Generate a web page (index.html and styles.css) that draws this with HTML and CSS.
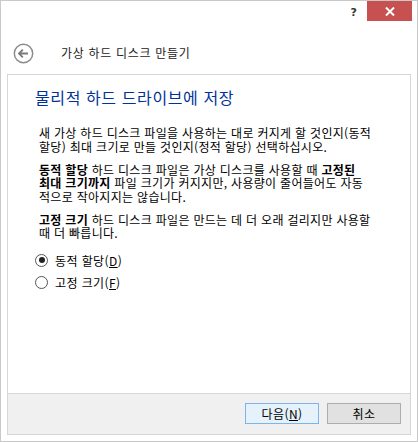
FILE: index.html
```html
<!DOCTYPE html>
<html lang="ko">
<head>
    <meta charset="UTF-8">
    <meta name="viewport" content="width=device-width, initial-scale=1.0">
    <title>가상 하드 디스크 만들기</title>
    <link rel="stylesheet" href="styles.css">
</head>
<body>
    <div class="window">
        <div class="titlebar">
            <span class="help">?</span>
            <div class="close">
                <svg width="10" height="9" viewBox="0 0 10 9">
                    <path d="M1 0.5 L9 8.5 M9 0.5 L1 8.5" stroke="#fff" stroke-width="2" fill="none"/>
                </svg>
            </div>
        </div>

        <div class="header">
            <svg class="back" width="21" height="21" viewBox="0 0 21 21">
                <circle cx="10.5" cy="10.5" r="9.2" stroke="#8c8c8c" stroke-width="1.5" fill="none"/>
                <path d="M6 10.5 H15 M9.8 6.6 L6 10.5 L9.8 14.4" stroke="#7a7a7a" stroke-width="1.8" fill="none"/>
            </svg>
            <span class="title">가상 하드 디스크 만들기</span>
        </div>

        <div class="panel">
            <div class="content">
                <h1>물리적 하드 드라이브에 저장</h1>
                <p>새 가상 하드 디스크 파일을 사용하는 대로 커지게 할 것인지(동적<br>할당) 최대 크기로 만들 것인지(정적 할당) 선택하십시오.</p>
                <p><b>동적 할당</b> 하드 디스크 파일은 가상 디스크를 사용할 때 <b>고정된</b><br><b>최대 크기까지</b> 파일 크기가 커지지만, 사용량이 줄어들어도 자동<br>적으로 작아지지는 않습니다.</p>
                <p><b>고정 크기</b> 하드 디스크 파일은 만드는 데 더 오래 걸리지만 사용할<br>때 더 빠릅니다.</p>

                <div class="radio first">
                    <span class="dot checked"></span>
                    <span>동적 할당(<u>D</u>)</span>
                </div>
                <div class="radio">
                    <span class="dot"></span>
                    <span>고정 크기(<u>F</u>)</span>
                </div>
            </div>

            <div class="footer">
                <button type="button" class="btn primary">다음(<u>N</u>)</button>
                <button type="button" class="btn">취소</button>
            </div>
        </div>
    </div>
</body>
</html>
```

FILE: styles.css
```css
body {
    margin: 0;
    padding: 0;
    font-family: "Noto Sans CJK KR", "Noto Sans", sans-serif;
    font-size: 12px;
    color: #000;
    background-color: #fff;
}
.window {
    width: 418px;
    height: 442px;
    box-sizing: border-box;
    border: 1px solid #c9c9c9;
    background-color: #fff;
}
.titlebar {
    height: 20px;
    display: flex;
    justify-content: flex-end;
    align-items: center;
    padding-right: 5px;
}
.help {
    font-family: "DejaVu Sans", sans-serif;
    font-weight: bold;
    font-size: 11px;
    color: #333;
    margin-right: 10px;
    margin-top: 2px;
}
.close {
    width: 45px;
    height: 20px;
    background-color: #c75050;
    display: flex;
    justify-content: center;
    align-items: center;
}
.header {
    height: 53px;
    box-sizing: border-box;
    display: flex;
    align-items: center;
    padding: 11px 0 0 12px;
}
.title {
    margin-left: 27px;
    color: #222;
    line-height: 14px;
    letter-spacing: 0.7px;
}
.panel {
    margin: 0 6px;
    height: 361px;
    box-sizing: border-box;
    border: 1px solid #d6d6d6;
    display: flex;
    flex-direction: column;
}
.content {
    flex: 1;
    padding: 12px 20px 0 27px;
}
.content h1 {
    margin: 0 0 19px 0;
    font-size: 16px;
    font-weight: normal;
    color: #003399;
    line-height: 20px;
    letter-spacing: 0.6px;
}
.content p {
    margin: 0 0 9.5px 4px;
    line-height: 13.5px;
    white-space: nowrap;
    letter-spacing: 0.3px;
}
.content b {
    font-weight: bold;
}
.radio {
    display: flex;
    align-items: center;
    height: 22px;
    letter-spacing: 0.4px;
}
.radio.first {
    margin-top: 1px;
}
.dot {
    width: 11px;
    height: 11px;
    border: 1px solid #555;
    border-radius: 50%;
    margin-right: 7px;
    position: relative;
    background-color: #fff;
}
.dot.checked::after {
    content: "";
    position: absolute;
    left: 2.5px;
    top: 2.5px;
    width: 6px;
    height: 6px;
    border-radius: 50%;
    background-color: #222;
}
.footer {
    height: 41px;
    box-sizing: border-box;
    border-top: 1px solid #d6d6d6;
    background-color: #f0f0f0;
    display: flex;
    justify-content: flex-end;
    align-items: flex-start;
    padding: 9px 9px 0 0;
    gap: 8px;
}
.btn {
    width: 74px;
    height: 21px;
    padding: 0;
    font-family: "Noto Sans CJK KR", "Noto Sans", sans-serif;
    font-size: 12px;
    color: #000;
    background-color: #e1e1e1;
    border: 1px solid #adadad;
    line-height: 17px;
    letter-spacing: 0.4px;
}
.btn.primary {
    background-color: #e5f1fb;
    border-color: #7eb4ea;
}
```
